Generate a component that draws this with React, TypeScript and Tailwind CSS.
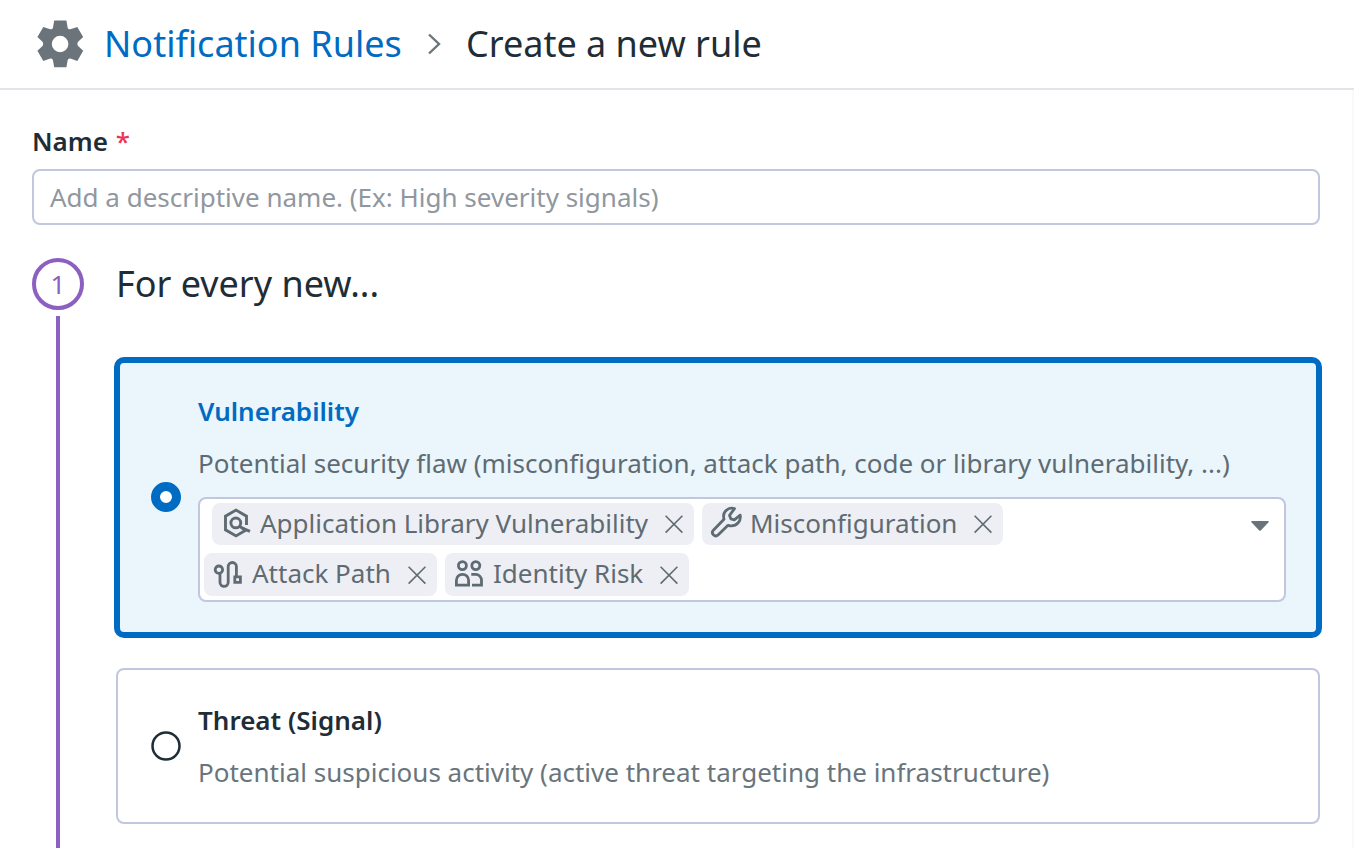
import type { ReactNode } from "react";

function GearIcon() {
  return (
    <svg className="block h-12 w-12 shrink-0" viewBox="0 0 48 48" fill="#6b747b">
      <path
        fillRule="evenodd"
        d="M18.2 .4h12.200l1.300 7.500c.3 1 1.700 1.700 2.600 1.400l7-2.400 5.900 10.200-5.100 4.600c-1 1.200-1 3.200 0 4.400l5.100 4.700-5.900 10.100-7-2.300c-.9-.3-2.300.4-2.600 1.400l-1.300 7.300H18.200l-1.300-7.300c-.3-1-1.700-1.700-2.600-1.400l-7 2.300L1.400 30.800l5.100-4.700c.9-1.200.9-3.200 0-4.400L1.400 17.100 7.300 6.900l7 2.400c.9.3 2.300-.4 2.600-1.400zM24.100 15.700a8.300 8.300 0 1 0 0 16.600 8.300 8.300 0 0 0 0-16.600z"
      />
    </svg>
  );
}

function LibraryIcon() {
  return (
    <svg className="block h-8 w-8 overflow-visible" viewBox="0 0 32 32" fill="none" stroke="#5f6b72" strokeWidth="2.9">
      <path d="M26.500 17V8.200L16 2.100 5.500 8.200v13.600L16 27.900l9.700-5.600" />
      <circle cx="15.800" cy="14.900" r="4.900" />
      <path d="M19.200 18l3.600 2.400 7.200 3" />
      <path d="M22 19.800l4.400 3" />
    </svg>
  );
}

function WrenchIcon() {
  return (
    <svg className="block h-8 w-8 overflow-visible" viewBox="0 0 32 32" fill="none" stroke="#5f6b72" strokeWidth="2.8" strokeLinejoin="round">
      <path d="M24.500 .6C19-1.200 13.300 3 13.600 8.200c0 1.200.1 2 .4 3L3.600 21.900c-1.500 1.500-1.500 3.500-.2 4.900 1.400 1.400 3.400 1.400 4.900-.1L18 17.300c1 .3 2 .5 3 .5C27 18 31.200 13 30.200 7.200L24.300 11.800 20.800 10.800 19.500 7.300z" />
    </svg>
  );
}

function PathIcon() {
  return (
    <svg className="block h-8 w-8" viewBox="0 0 32 32" fill="none" stroke="#5f6b72" strokeWidth="2.800">
      <circle cx="6.900" cy="10.700" r="3.700" />
      <path d="M8 14.200v9.100a4.100 4.100 0 0 0 8.200 0V7.600a4.100 4.100 0 0 1 8.200 0V17.500" />
      <path d="M22.800 17.800h5.600v5.600h-5.600z" />
    </svg>
  );
}

function PeopleIcon() {
  return (
    <svg className="block h-8 w-8" viewBox="0 0 32 32" fill="none" stroke="#5f6b72" strokeWidth="2.800">
      <circle cx="9.400" cy="6.600" r="4" />
      <circle cx="22.800" cy="6.600" r="4" />
      <path d="M3.400 26.100v-4.700a6.100 6.100 0 0 1 12.200 0v4.700z" />
      <path d="M18.300 15.400h4.300a5.900 5.900 0 0 1 5.900 5.900v4.800H19" />
    </svg>
  );
}

function CloseIcon() {
  return (
    <svg className="block h-5 w-5" viewBox="0 0 20 20" fill="none" stroke="#5f6b72" strokeWidth="1.600">
      <path d="M1.600 1.800l16.800 16.800M18.400 1.800l-16.800 16.800" />
    </svg>
  );
}

interface TagProps {
  label: string;
  icon: ReactNode;
  className: string;
}

function Tag({ label, icon, className }: TagProps) {
  return (
    <div className={`flex shrink-0 items-center rounded-lg bg-[#eeeff5] pl-2 text-[#5f6b72] ${className}`}>
      {icon}
      <span className="ml-2 flex-1 whitespace-nowrap text-[26px] leading-10">{label}</span>
      <button type="button" aria-label={`Remove ${label}`} className="mr-[10px]">
        <CloseIcon />
      </button>
    </div>
  );
}

export default function App() {
  return (
    <div className="flex h-[848px] w-[1354px] flex-col overflow-hidden bg-white font-['Noto_Sans',sans-serif] text-[#1f2d36]">
      <header className="flex h-[90px] shrink-0 items-center border-b-2 border-[#e2e4ea] pl-9 text-[36px]">
        <GearIcon />
        <a className="ml-5 w-[298px] whitespace-nowrap text-[#006bc2]">Notification Rules</a>
        <svg className="ml-6 h-[22px] w-4" viewBox="0 0 16 22" fill="none" stroke="#69757c" strokeWidth="2.400">
          <path d="M3 1.500l10 9.500-10 9.500" />
        </svg>
        <h1 className="ml-6 whitespace-nowrap">Create a new rule</h1>
      </header>

      <main className="flex flex-1 flex-col border-r-2 border-[#f9f9fa] px-8 pt-[31px]">
        <label className="block h-12 shrink-0 text-[26px] font-semibold leading-10">
          Name <span className="ml-px font-medium text-[#ef3350]">*</span>
        </label>
        <input
          className="h-14 w-[1288px] shrink-0 rounded-lg border-2 border-[#c0c7df] px-4 text-[26px] placeholder:text-[#90979e]"
          placeholder="Add a descriptive name. (Ex: High severity signals)"
        />

        <section className="mt-[33px] flex flex-1">
          <div className="flex w-[52px] shrink-0 flex-col items-center">
            <div className="flex h-[52px] w-[52px] shrink-0 items-center justify-center rounded-full border-4 border-[#8c60c0] text-[26px] text-[#8c60c0]">
              1
            </div>
            <div className="mt-[6px] w-1 flex-1 bg-[#8c60c0]" />
          </div>

          <div className="ml-[30px] w-[1208px] shrink-0">
            <h2 className="ml-[2px] h-[99px] text-[36px] leading-[52px]">For every new...</h2>

            <div className="flex h-[281px] items-center rounded-[10px] border-[6px] border-[#006bc2] bg-[#eaf5fc] pb-[2px] pl-[31px]">
              <div className="mt-px h-[30px] w-[30px] shrink-0 rounded-full border-[9px] border-[#006bc2] bg-white" />
              <div className="ml-[17px] w-[1088px]">
                <h3 className="text-[26px] font-semibold leading-10 text-[#006bc2]">Vulnerability</h3>
                <p className="mt-3 whitespace-nowrap text-[26px] leading-10 text-[#5f6b72]">
                  Potential security flaw (misconfiguration, attack path, code or library vulnerability, ...)
                </p>
                <div className="mt-[14px] flex h-[105px] justify-between rounded-lg border-2 border-[#c0c7df] bg-white">
                  <div className="flex flex-col gap-2 pl-1 pt-1">
                    <div className="flex gap-2 pl-2">
                      <Tag className="h-[42px] w-[482px] [&>span]:pb-0.5" label="Application Library Vulnerability" icon={<LibraryIcon />} />
                      <Tag className="h-[42px] w-[301px] [&>span]:pb-0.5" label="Misconfiguration" icon={<WrenchIcon />} />
                    </div>
                    <div className="flex gap-2">
                      <Tag className="h-[43px] w-[233px] [&>span]:pb-1" label="Attack Path" icon={<PathIcon />} />
                      <Tag className="h-[43px] w-[244px] [&>span]:pb-1" label="Identity Risk" icon={<PeopleIcon />} />
                    </div>
                  </div>
                  <svg className="mr-[15px] mt-[22px] h-[11px] w-[18px]" viewBox="0 0 18 11" fill="#69737a">
                    <path d="M1 0h16q1.500 0 .5 1.300L10 9.300q-1 1-2 0L.5 1.300Q-.5 0 1 0z" />
                  </svg>
                </div>
              </div>
            </div>

            <div className="ml-[2px] mt-[30px] flex h-[156px] w-[1204px] items-center rounded-lg border-2 border-[#c0c7df] pl-[33px]">
              <svg className="h-[30px] w-[30px] shrink-0" viewBox="0 0 30 30" fill="none" stroke="#1f2d36" strokeWidth="2.500">
                <circle cx="15" cy="15" r="13.500" />
              </svg>
              <div className="ml-[17px]">
                <h3 className="text-[26px] font-semibold leading-10">Threat (Signal)</h3>
                <p className="mt-3 whitespace-nowrap text-[26px] leading-10 text-[#69757c]">
                  Potential suspicious activity (active threat targeting the infrastructure)
                </p>
              </div>
            </div>
          </div>
        </section>
      </main>
    </div>
  );
}
